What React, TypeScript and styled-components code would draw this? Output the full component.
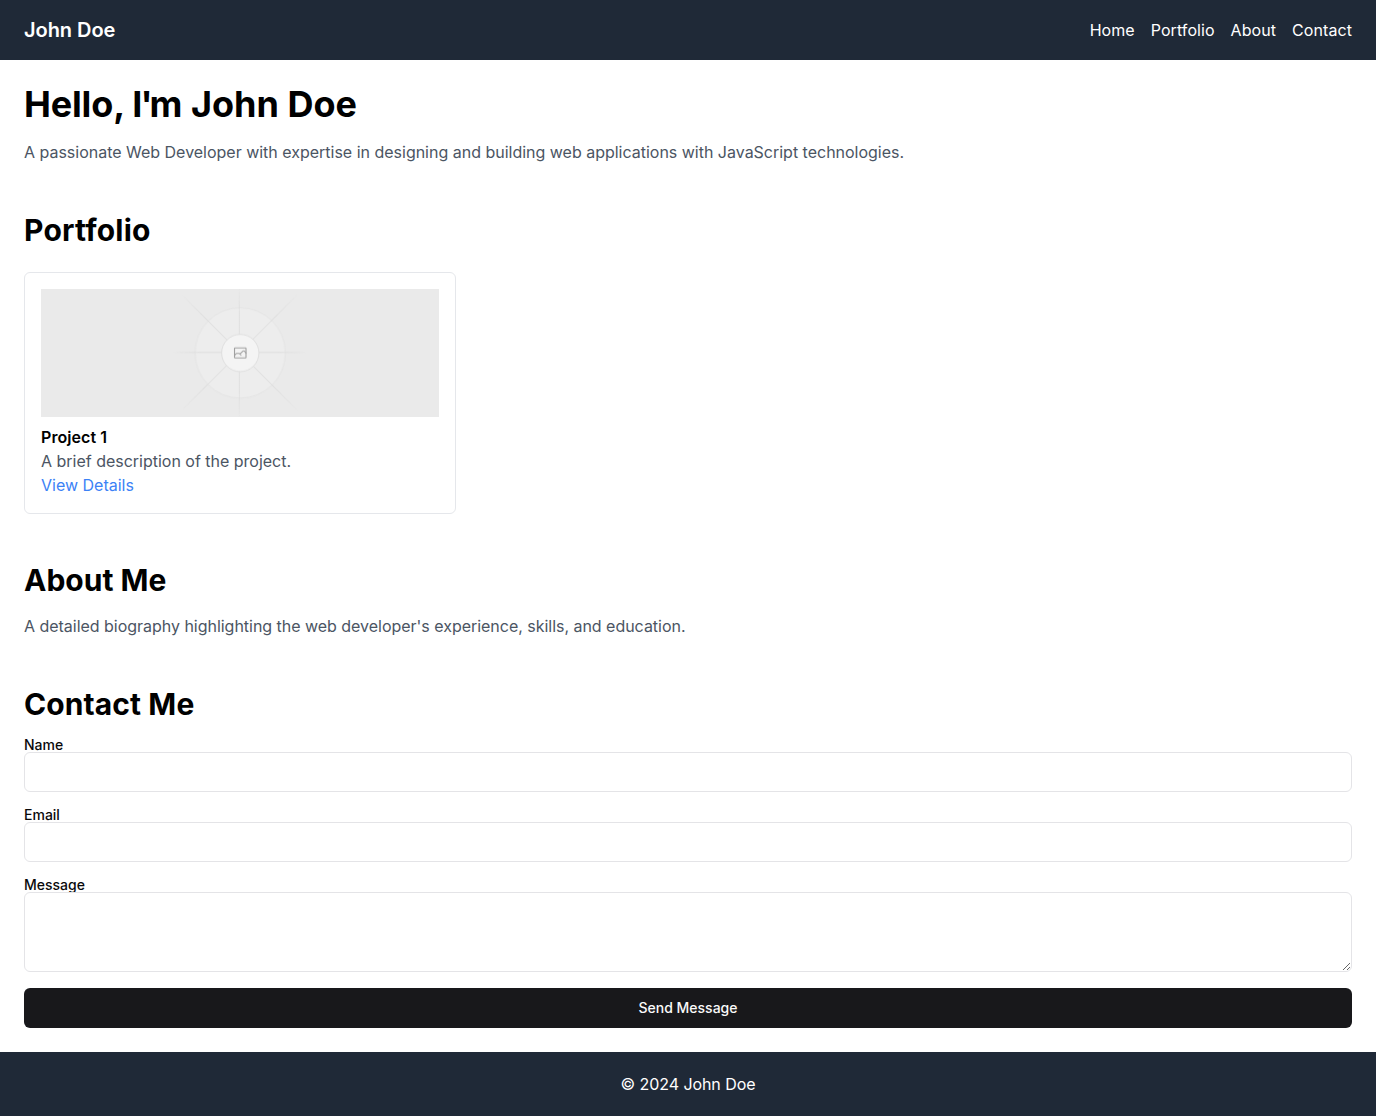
import React from "react";
import styled, { createGlobalStyle } from "styled-components";

const GlobalStyle = createGlobalStyle`
  *, *::before, *::after { box-sizing: border-box; }
  body {
    margin: 0;
    background: #fff;
    color: #000;
    font-family: Inter, "Liberation Sans", sans-serif;
    font-size: 16px;
    line-height: 24px;
  }
  h1, h2, h3, p { margin: 0; }
  a { color: inherit; text-decoration: none; }
`;

const Header = styled.header`
  display: flex;
  align-items: center;
  justify-content: space-between;
  padding: 16px 24px;
  background: #1f2937;
  color: #fff;
`;

const Brand = styled.div`
  font-size: 20px;
  line-height: 28px;
  font-weight: 600;
  letter-spacing: -0.05px;
`;

const Nav = styled.nav`
  display: flex;
  gap: 16px;
  letter-spacing: 0.07px;
`;

const Main = styled.main`
  display: flex;
  flex-direction: column;
  gap: 48px;
  padding: 24px;
`;

const Section = styled.section<{ $gap?: number }>`
  display: flex;
  flex-direction: column;
  gap: ${({ $gap = 16 }) => $gap}px;
`;

const Title = styled.h1`
  font-size: 36px;
  line-height: 40px;
  font-weight: 700;
`;

const Kern = styled.span<{ $by: number }>`
  letter-spacing: ${({ $by }) => $by}px;
`;

const Heading = styled.h2<{ $tracking?: number }>`
  font-size: 30px;
  line-height: 36px;
  font-weight: 700;
  letter-spacing: ${({ $tracking = 0 }) => $tracking}px;
`;

const Text = styled.p<{ $tracking?: number }>`
  color: #4b5563;
  letter-spacing: ${({ $tracking = -0.01 }) => $tracking}px;
`;

const Grid = styled.div`
  display: grid;
  grid-template-columns: repeat(3, minmax(0, 1fr));
  gap: 16px;
`;

const Card = styled.article`
  padding: 16px;
  border: 1px solid #e5e7eb;
  border-radius: 6px;
`;

const Thumb = styled.svg`
  display: block;
  width: 100%;
  height: 128px;
  margin-bottom: 8px;
`;

const CardTitle = styled.h3`
  font-size: 16px;
  line-height: 24px;
  font-weight: 600;
  letter-spacing: 0.06px;
`;

const CardLink = styled.a`
  && { color: #3b82f6; }
`;

const Form = styled.form`
  display: flex;
  flex-direction: column;
  gap: 16px;
`;

const Field = styled.div`
  display: flex;
  flex-direction: column;
`;

const Label = styled.label`
  font-size: 14px;
  line-height: 14px;
  font-weight: 500;
  color: #09090b;
`;

const Input = styled.input`
  height: 40px;
  width: 100%;
  padding: 8px 12px;
  border: 1px solid #e4e4e7;
  border-radius: 6px;
  background: #fff;
  font: inherit;
  font-size: 14px;
`;

const TextArea = styled.textarea`
  display: block;
  height: 80px;
  width: 100%;
  padding: 8px 12px;
  border: 1px solid #e4e4e7;
  border-radius: 6px;
  background: #fff;
  font: inherit;
  font-size: 14px;
  resize: vertical;
`;

const Submit = styled.button`
  height: 40px;
  border: 0;
  border-radius: 6px;
  background: #18181b;
  color: #fafafa;
  font: inherit;
  font-size: 14px;
  line-height: 20px;
  font-weight: 500;
`;

const Footer = styled.footer`
  padding: 20px 24px;
  background: #1f2937;
  color: #fff;
  text-align: center;
  letter-spacing: -0.07px;
`;

const NAV = ["Home", "Portfolio", "About", "Contact"];

const CX = 600.709;
const CY = 599.88;
const RAYS = [
  { angle: 0, half: 202.4 },
  { angle: 90, half: 202.4 },
  { angle: 45, half: 250 },
  { angle: -45, half: 250 },
];

function Placeholder() {
  return (
    <Thumb viewBox="0 0 1200 1200" preserveAspectRatio="xMidYMid slice" aria-label="Project 1">
      <defs>
        {RAYS.map(({ half }, i) => (
          <linearGradient key={i} id={`ray${i}`} gradientUnits="userSpaceOnUse" x1={-half} x2={half} y1="0" y2="0">
            <stop stopColor="#c9c9c9" stopOpacity="0" />
            <stop offset=".208" stopColor="#c9c9c9" />
            <stop offset=".792" stopColor="#c9c9c9" />
            <stop offset="1" stopColor="#c9c9c9" stopOpacity="0" />
          </linearGradient>
        ))}
      </defs>
      <rect width="1200" height="1200" fill="#eaeaea" />
      <g opacity=".5">
        <circle opacity=".5" cx={CX} cy={CY} r="136" fill="#fafafa" stroke="#c9c9c9" strokeWidth="2.418" />
        {RAYS.map(({ angle, half }, i) => (
          <path
            key={i}
            d={`M${-half} 0H${half}`}
            transform={`translate(${CX - 2} ${CY - 1.4}) rotate(${angle})`}
            stroke={`url(#ray${i})`}
            strokeWidth="2.6"
          />
        ))}
        <circle cx={CX} cy={CY} r="56.2" fill="#fff" stroke="#c9c9c9" strokeWidth="2.418" />
        <g fill="none" stroke="#555" strokeWidth="3.4">
          <rect x="583.4" y="584.4" width="34.6" height="30.2" rx="1.5" />
          <path d="M583.4 607l6-6h8l6.5 6M599.5 603l10-9.5h3l6.5 7" />
        </g>
      </g>
    </Thumb>
  );
}

export default function App() {
  return (
    <>
      <GlobalStyle />
      <Header>
        <Brand>John Doe</Brand>
        <Nav>
          {NAV.map((item) => (
            <a key={item} href={`#${item.toLowerCase()}`}>{item}</a>
          ))}
        </Nav>
      </Header>
      <Main>
        <Section id="home">
          <Title>
            <Kern $by={-0.16}>Hello, </Kern>
            <Kern $by={-2}>I</Kern>
            <Kern $by={-3}>'</Kern>m John Doe
          </Title>
          <Text>
            A passionate Web Developer with expertise in designing and building web applications with JavaScript technologies.
          </Text>
        </Section>
        <Section id="portfolio" $gap={24}>
          <Heading $tracking={0.2}>Portfolio</Heading>
          <Grid>
            <Card>
              <Placeholder />
              <CardTitle>Project 1</CardTitle>
              <Text>A brief description of the project.</Text>
              <CardLink href="#project-1">View Details</CardLink>
            </Card>
          </Grid>
        </Section>
        <Section id="about">
          <Heading>About Me</Heading>
          <Text $tracking={-0.025}>A detailed biography highlighting the web developer's experience, skills, and education.</Text>
        </Section>
        <Section id="contact">
          <Heading $tracking={0.1}>Contact Me</Heading>
          <Form>
            <Field>
              <Label htmlFor="name">Name</Label>
              <Input id="name" />
            </Field>
            <Field>
              <Label htmlFor="email">Email</Label>
              <Input id="email" type="email" />
            </Field>
            <Field>
              <Label htmlFor="message">Message</Label>
              <TextArea id="message" />
            </Field>
            <Submit type="button">Send Message</Submit>
          </Form>
        </Section>
      </Main>
      <Footer>© 2024 John Doe</Footer>
    </>
  );
}
